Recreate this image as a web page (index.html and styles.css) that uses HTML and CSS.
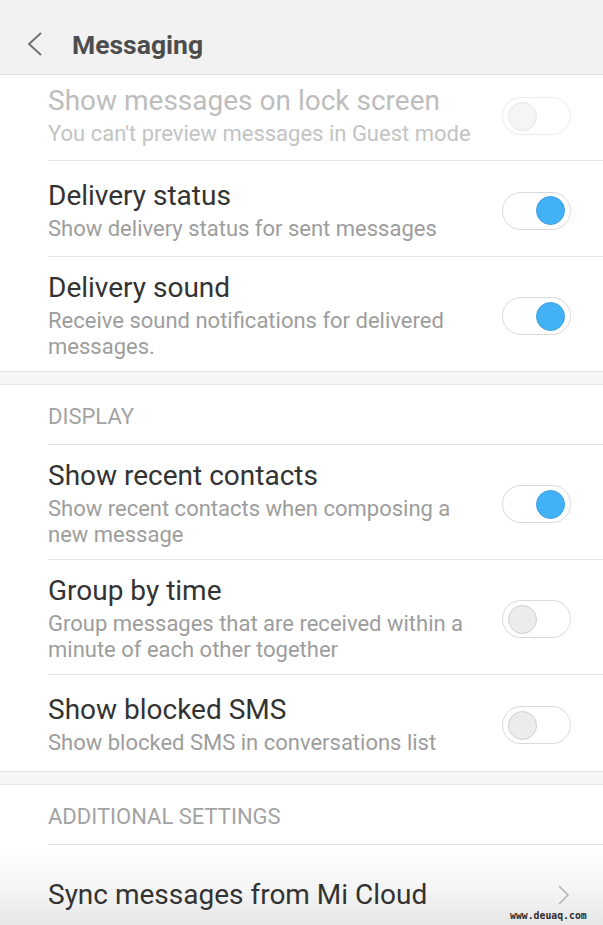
FILE: index.html
```html
<!DOCTYPE html>
<html lang="en">
<head>
    <meta charset="UTF-8">
    <meta name="viewport" content="width=device-width, initial-scale=1.0">
    <title>Messaging</title>
    <link rel="stylesheet" href="styles.css">
</head>
<body>

    <header class="top-bar">
        <svg class="back-icon" width="16" height="24" viewBox="0 0 16 24">
            <polyline points="14,1 2,12 14,23" fill="none" stroke="#6b6b6b" stroke-width="1.8"/>
        </svg>
        <h1>Messaging</h1>
    </header>

    <div class="settings">
        <div class="row row-clipped disabled">
            <div class="row-text">
                <div class="row-title">Show messages on lock screen</div>
                <div class="row-sub">You can't preview messages in Guest mode</div>
            </div>
            <span class="toggle"></span>
        </div>
        <div class="row">
            <div class="row-text">
                <div class="row-title">Delivery status</div>
                <div class="row-sub">Show delivery status for sent messages</div>
            </div>
            <span class="toggle on"></span>
        </div>
        <div class="row last">
            <div class="row-text">
                <div class="row-title">Delivery sound</div>
                <div class="row-sub">Receive sound notifications for delivered messages.</div>
            </div>
            <span class="toggle on"></span>
        </div>

        <div class="gap"></div>

        <div class="section-label">DISPLAY</div>
        <div class="row">
            <div class="row-text">
                <div class="row-title">Show recent contacts</div>
                <div class="row-sub">Show recent contacts when composing a new message</div>
            </div>
            <span class="toggle on"></span>
        </div>
        <div class="row">
            <div class="row-text">
                <div class="row-title">Group by time</div>
                <div class="row-sub">Group messages that are received within a minute of each other together</div>
            </div>
            <span class="toggle"></span>
        </div>
        <div class="row last">
            <div class="row-text">
                <div class="row-title">Show blocked SMS</div>
                <div class="row-sub">Show blocked SMS in conversations list</div>
            </div>
            <span class="toggle"></span>
        </div>

        <div class="gap"></div>

        <div class="section-label">ADDITIONAL SETTINGS</div>
        <div class="row link-row">
            <div class="row-title">Sync messages from Mi Cloud</div>
            <svg class="chevron" width="12" height="20" viewBox="0 0 12 20">
                <polyline points="1,1 10,10 1,19" fill="none" stroke="#b5b5b5" stroke-width="1.5"/>
            </svg>
        </div>
    </div>

    <span class="watermark">www.deuaq.com</span>

</body>
</html>
```

FILE: styles.css
```css
body {
    margin: 0;
    background-color: #fff;
    font-family: Roboto, "Noto Sans", Arial, sans-serif;
    color: #333;
    height: 925px;
    overflow: hidden;
    position: relative;
}

.top-bar {
    height: 75px;
    box-sizing: border-box;
    padding: 14px 0 0 27px;
    background-color: #f1f2f1;
    border-bottom: 1px solid #dcdcdc;
    display: flex;
    align-items: center;
}

.back-icon {
    margin-right: 29px;
}

.top-bar h1 {
    margin: 0;
    font-size: 26.5px;
    font-weight: bold;
    color: #4d4d4d;
}

.row {
    display: flex;
    align-items: center;
    min-height: 96px;
    box-sizing: border-box;
    padding: 15px 32px 11px 0;
    margin-left: 48px;
    border-bottom: 1px solid #e3e3e3;
}

.row.last {
    border-bottom: none;
}

.row-clipped {
    min-height: 0;
    padding-top: 10px;
    padding-bottom: 13px;
}

.row-text {
    flex: 1;
    padding-right: 24px;
}

.row-title {
    font-size: 28px;
    line-height: 32px;
    color: #333;
}

.row-sub {
    font-size: 22px;
    line-height: 26px;
    margin-top: 4px;
    color: #9d9d9d;
}

.disabled .row-title {
    color: #bdbdbd;
}

.disabled .row-sub {
    color: #c3c3c3;
}

.toggle {
    width: 69px;
    height: 38px;
    box-sizing: border-box;
    border: 1px solid #d9d9d9;
    border-radius: 19px;
    background-color: #fff;
    display: flex;
    align-items: center;
    padding: 0 5px;
    flex-shrink: 0;
}

.toggle::after {
    content: "";
    width: 27px;
    height: 27px;
    border-radius: 50%;
    background-color: #ececec;
    border: 1px solid #cfcfcf;
}

.toggle.on {
    justify-content: flex-end;
}

.toggle.on::after {
    background-color: #43b1f6;
    border-color: #3c9fe0;
}

.disabled .toggle {
    border-color: #ececec;
}

.disabled .toggle::after {
    background-color: #f5f5f5;
    border-color: #e6e6e6;
}

.gap {
    height: 12px;
    background-color: #f6f6f6;
    border-top: 1px solid #e3e3e3;
    border-bottom: 1px solid #e6e6e6;
}

.section-label {
    margin-left: 48px;
    height: 60px;
    box-sizing: border-box;
    padding-top: 19px;
    font-size: 22px;
    line-height: 26px;
    color: #a3a3a3;
    border-bottom: 1px solid #e3e3e3;
}

.link-row {
    min-height: 82px;
    padding-top: 18px;
    padding-bottom: 0;
    margin-left: 0;
    padding-left: 48px;
    padding-right: 33px;
    justify-content: space-between;
    border-bottom: none;
    background: linear-gradient(#fff 0%, #f6f6f6 50%, #e6e6e6 100%);
}

.watermark {
    position: absolute;
    left: 510px;
    top: 910px;
    font-family: "DejaVu Sans Mono", monospace;
    font-size: 9.8px;
    font-weight: bold;
    color: #2f2f2f;
}
```
